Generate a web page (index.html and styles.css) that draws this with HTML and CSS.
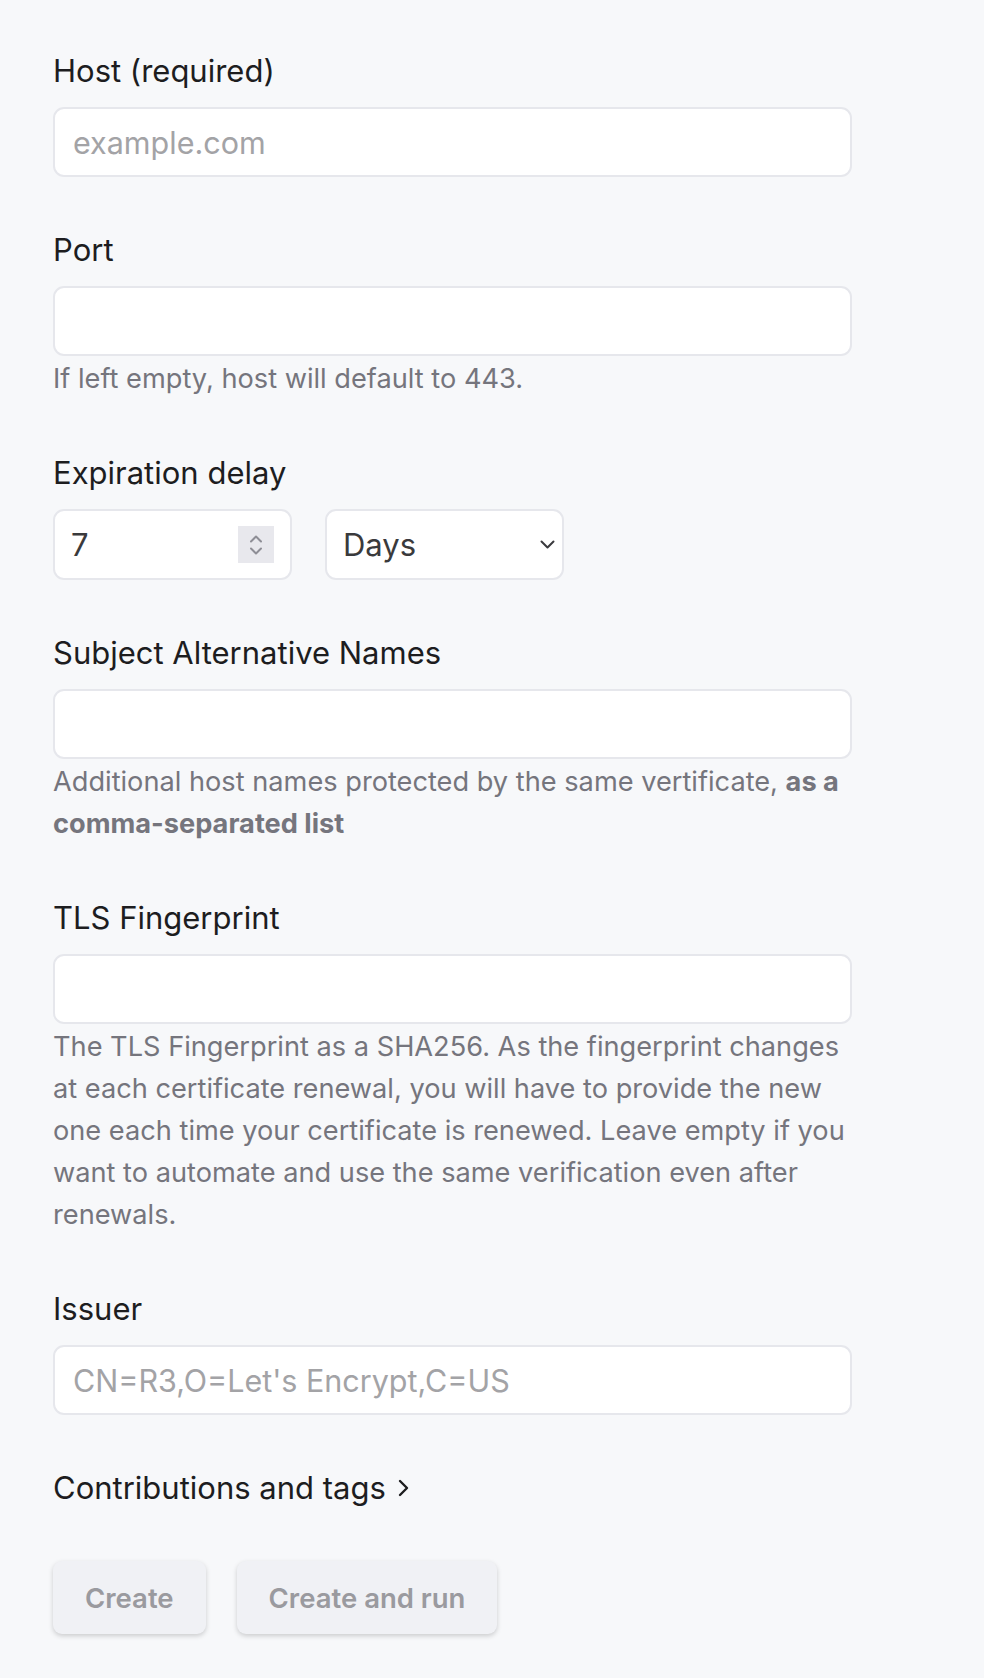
FILE: index.html
```html
<!DOCTYPE html>
<html lang="en">
<head>
<meta charset="utf-8">
<title>Create check</title>
<link rel="stylesheet" href="styles.css">
</head>
<body>
<form class="form">
  <div class="group">
    <label class="label" for="host">Host (required)</label>
    <input class="field" id="host" type="text" placeholder="example.com">
  </div>
  <div class="group">
    <label class="label" for="port">Port</label>
    <input class="field" id="port" type="text">
    <p class="help">If left empty, host will default to 443.</p>
  </div>
  <div class="group">
    <label class="label" for="delay">Expiration delay</label>
    <div class="delay-row">
      <div class="number-box">
        <input class="number-input" id="delay" type="text" value="7">
        <span class="spinner">
          <svg width="16" height="26" viewBox="0 0 16 26" fill="none" stroke="#8e8e96" stroke-width="2" stroke-linecap="round" stroke-linejoin="round"><path d="M3 9.5 8 4.5 13 9.5"/><path d="M3 16.5 8 21.5 13 16.5"/></svg>
        </span>
      </div>
      <div class="select-box">
        <span class="select-value">Days</span>
        <svg class="select-chevron" width="15" height="9" viewBox="0 0 15 9" fill="none" stroke="#3a3a3e" stroke-width="2" stroke-linecap="round" stroke-linejoin="round"><path d="M1.5 1.5 7.5 7.5 13.5 1.5"/></svg>
      </div>
    </div>
  </div>
  <div class="group">
    <label class="label" for="san">Subject Alternative Names</label>
    <input class="field" id="san" type="text">
    <p class="help">Additional host names protected by the same vertificate, <strong>as a comma-separated list</strong></p>
  </div>
  <div class="group">
    <label class="label" for="tls">TLS Fingerprint</label>
    <input class="field" id="tls" type="text">
    <p class="help">The TLS Fingerprint as a SHA256. As the fingerprint changes at each certificate renewal, you will have to provide the new one each time your certificate is renewed. Leave empty if you want to automate and use the same verification even after renewals.</p>
  </div>
  <div class="group">
    <label class="label" for="issuer">Issuer</label>
    <input class="field" id="issuer" type="text" placeholder="CN=R3,O=Let's Encrypt,C=US">
  </div>
  <div class="group">
    <div class="toggle">Contributions and tags
      <svg class="toggle-chevron" width="14" height="22" viewBox="0 0 14 22" fill="none" stroke="#1d1d1f" stroke-width="2.4" stroke-linecap="round" stroke-linejoin="round"><path d="M4 4 11 11 4 18"/></svg>
    </div>
  </div>
  <div class="actions">
    <button class="btn" type="button">Create</button>
    <button class="btn" type="button">Create and run</button>
  </div>
</form>
</body>
</html>
```
FILE: styles.css
```css
* { box-sizing: border-box; }
html, body { margin: 0; padding: 0; background: #f7f8fa; }
body {
  font-family: Inter, "Noto Sans", "Liberation Sans", sans-serif;
  color: #1d1d1f;
  padding: 50px 0 40px 53px;
}
.form {
  width: 799px;
  display: flex;
  flex-direction: column;
  gap: 52px;
}
.group { display: flex; flex-direction: column; }
.label {
  font-size: 31px;
  line-height: 42px;
  color: #1d1d1f;
  margin-bottom: 15px;
}
.field {
  width: 100%;
  height: 70px;
  border: 2px solid #e6e7ec;
  border-radius: 11px;
  background: #fff;
  padding: 0 18px;
  font-family: inherit;
  font-size: 30.5px;
  color: #3a3a3c;
  outline: none;
}
.field::placeholder { color: #a3a3a6; }
.help {
  margin: 2px 0 0;
  font-size: 27.2px;
  line-height: 42px;
  color: #75757d;
}
.help strong { font-weight: 700; }
.delay-row { display: flex; gap: 33px; }
.number-box, .select-box {
  width: 239px;
  height: 71px;
  border: 2px solid #e6e7ec;
  border-radius: 11px;
  background: #fff;
  display: flex;
  align-items: center;
}
.number-box { padding: 0 16px 0 16px; }
.number-input {
  flex: 1;
  min-width: 0;
  border: none;
  outline: none;
  background: transparent;
  font-family: inherit;
  font-size: 31px;
  color: #3a3a3c;
  padding: 0;
}
.spinner {
  width: 36px;
  height: 37px;
  background: #e8e8ed;
  display: flex;
  align-items: center;
  justify-content: center;
}
.select-box { padding: 0 7px 0 16px; justify-content: space-between; }
.select-value { font-size: 31px; color: #3a3a3c; }
.toggle {
  font-size: 31px;
  line-height: 42px;
  color: #1d1d1f;
  display: flex;
  align-items: center;
  gap: 10px;
}
.actions { display: flex; gap: 31px; }
.btn {
  height: 73px;
  padding: 0 32px;
  border: none;
  border-radius: 9px;
  background: #f0f1f5;
  color: #9a9a9f;
  font-family: inherit;
  font-size: 27.5px;
  font-weight: 600;
  box-shadow: 0 2px 5px rgba(0, 0, 0, 0.18);
}
```
